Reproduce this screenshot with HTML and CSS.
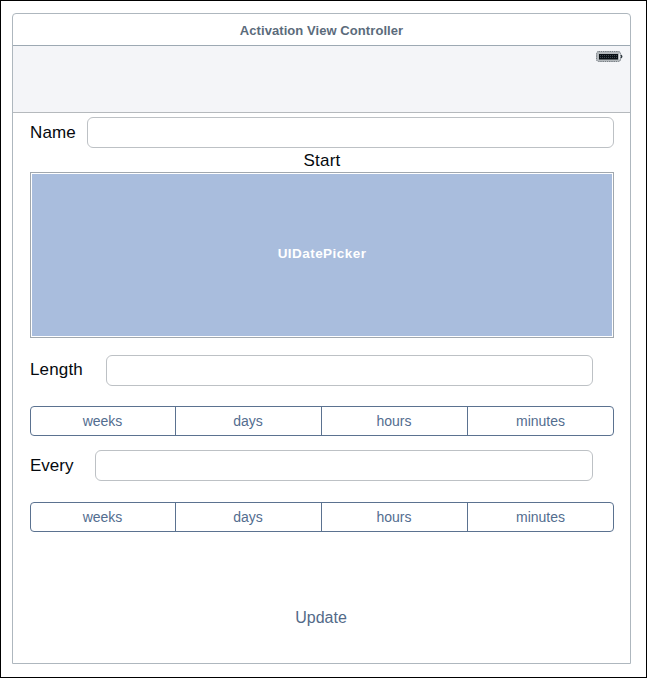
FILE: index.html
```
<!DOCTYPE html>
<html lang="en">
<head>
<meta charset="utf-8">
<title>Activation View Controller</title>
<link rel="stylesheet" href="styles.css">
</head>
<body>
<main class="scene">
  <header class="scene-title"><span>Activation View Controller</span></header>
  <div class="nav-bar">
    <svg class="battery" width="27" height="12" viewBox="0 0 27 12" aria-hidden="true">
      <rect x="0.5" y="0.5" width="24" height="10" rx="2" fill="#b3b8bc" stroke="#777e84" stroke-dasharray="1.5 .7"/>
      <rect x="3" y="3" width="19" height="5.5" fill="#0b1015"/>
      <path d="M4 4.5H21M4 6.5H21" stroke="#4d5963" stroke-width=".8" stroke-dasharray="1 1"/>
      <path d="M23.5 2.5V8.5" stroke="#e4e8ea"/>
      <path d="M25 3.5Q26.4 4 26.4 5.5Q26.4 7 25 7.5Z" fill="#303940"/>
    </svg>
  </div>
  <form class="form">
    <div class="row name-row"><label for="name">Name</label><input id="name" type="text"></div>
    <div class="start">Start</div>
    <div class="picker"><div class="picker-fill"><span>UIDatePicker</span></div></div>
    <div class="row length-row"><label for="length">Length</label><input id="length" type="text"></div>
    <div class="segments"><span>weeks</span><span>days</span><span>hours</span><span>minutes</span></div>
    <div class="row every-row"><label for="every">Every</label><input id="every" type="text"></div>
    <div class="segments"><span>weeks</span><span>days</span><span>hours</span><span>minutes</span></div>
    <button class="update" type="button">Update</button>
  </form>
</main>
</body>
</html>
```
FILE: styles.css
```
* { box-sizing: border-box; }

body {
  margin: 0;
  height: 678px;
  padding: 12px 15px 0 11px;
  border: 1px solid #000;
  background: #fff;
  color: #05090e;
  font-family: "Liberation Sans", Arial, sans-serif;
}

.scene {
  width: 619px;
  height: 651px;
  border: 1px solid #aeb7be;
  border-radius: 4px 4px 0 0;
}

.scene-title {
  height: 32px;
  padding: 1px 0 0;
  border-bottom: 1px solid #9da9b3;
  display: flex;
  align-items: center;
  justify-content: center;
  color: #5b6b7b;
  font-size: 13px;
  font-weight: bold;
  letter-spacing: .07px;
}

.nav-bar {
  height: 67px;
  padding: 5px 7px 0 0;
  border-bottom: 1px solid #b5b9bd;
  display: flex;
  justify-content: flex-end;
  background: #f4f5f8;
}

.form {
  padding: 4px 16px 0 17px;
  display: flex;
  flex-direction: column;
}

.row {
  height: 31px;
  display: flex;
  align-items: center;
  font-size: 17px;
}

.row label {
  flex: none;
  letter-spacing: .15px;
}

.row input {
  flex: 1;
  min-width: 0;
  height: 31px;
  padding: 0 8px;
  border: 1px solid #bdc1c5;
  border-radius: 6px;
  background: #fff;
  outline: none;
}

.name-row label { width: 57px; }

.length-row { margin: 17px 21px 20px 0; }
.length-row label { width: 76px; padding-bottom: 2px; }

.every-row { margin: 14px 21px 21px 0; }
.every-row label { width: 65px; letter-spacing: 0; }

.start {
  height: 24px;
  padding-top: 1px;
  font-size: 17px;
  line-height: 23px;
  letter-spacing: .2px;
  text-align: center;
}

.picker {
  height: 166px;
  padding: 1px;
  border: 1px solid #a1a8ae;
}

.picker-fill {
  height: 100%;
  padding-bottom: 4px;
  display: flex;
  align-items: center;
  justify-content: center;
  background: #a9bddd;
  color: #fff;
  font-size: 13.5px;
  font-weight: bold;
  letter-spacing: .45px;
}

.segments {
  height: 30px;
  border: 1px solid #5b7290;
  border-radius: 4px;
  display: grid;
  grid-template-columns: 144px 146px 146px 1fr;
  color: #536d8f;
  font-size: 14px;
  line-height: 28px;
  text-align: center;
}

.segments span { padding-right: 1px; }
.segments span:last-child { padding-right: 0; }
.segments span + span { border-left: 1px solid #5b7290; }

.update {
  margin: 75px 2px 0 0;
  padding: 0;
  align-self: center;
  border: 0;
  background: none;
  color: #536a88;
  font: 16px/22px "Liberation Sans", Arial, sans-serif;
}
```
